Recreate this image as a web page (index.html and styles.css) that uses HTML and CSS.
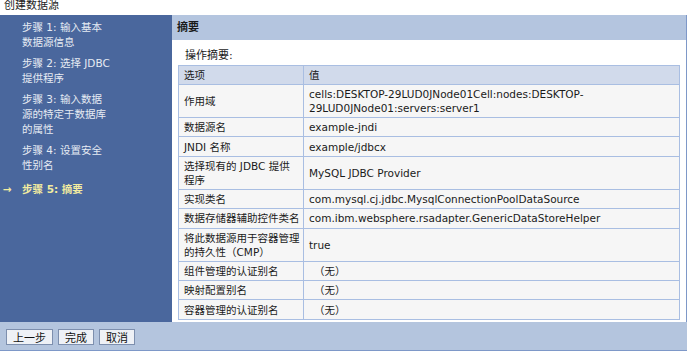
FILE: index.html
```html
<!DOCTYPE html>
<html lang="zh-CN">
<head>
  <meta charset="UTF-8">
  <title>创建数据源</title>
  <link rel="stylesheet" href="styles.css">
</head>
<body>
  <div class="page-title">创建数据源</div>
  <div class="wizard">
    <div class="steps">
      <div class="step">步骤 1: 输入基本数据源信息</div>
      <div class="step">步骤 2: 选择 JDBC 提供程序</div>
      <div class="step">步骤 3: 输入数据源的特定于数据库的属性</div>
      <div class="step">步骤 4: 设置安全性别名</div>
      <div class="step current"><span class="arrow">&rarr;</span>步骤 5: 摘要</div>
    </div>
    <div class="main">
      <div class="main-head">摘要</div>
      <div class="summary-label">操作摘要:</div>
      <table class="summary">
        <tr><th class="opt">选项</th><th>值</th></tr>
        <tr><td>作用域</td><td>cells:DESKTOP-29LUD0JNode01Cell:nodes:DESKTOP-<br>29LUD0JNode01:servers:server1</td></tr>
        <tr><td>数据源名</td><td>example-jndi</td></tr>
        <tr><td>JNDI 名称</td><td>example/jdbcx</td></tr>
        <tr><td>选择现有的 JDBC 提供<br>程序</td><td>MySQL JDBC Provider</td></tr>
        <tr><td>实现类名</td><td>com.mysql.cj.jdbc.MysqlConnectionPoolDataSource</td></tr>
        <tr><td>数据存储器辅助控件类名</td><td>com.ibm.websphere.rsadapter.GenericDataStoreHelper</td></tr>
        <tr><td>将此数据源用于容器管理的持久性（CMP）</td><td>true</td></tr>
        <tr><td>组件管理的认证别名</td><td class="none">（无）</td></tr>
        <tr><td>映射配置别名</td><td class="none">（无）</td></tr>
        <tr><td>容器管理的认证别名</td><td class="none">（无）</td></tr>
      </table>
    </div>
  </div>
  <div class="footer">
    <button class="btn">上一步</button>
    <button class="btn">完成</button>
    <button class="btn">取消</button>
  </div>
</body>
</html>
```

FILE: styles.css
```css
body {
  margin: 0;
  font-family: "DejaVu Sans", "Noto Sans CJK SC", sans-serif;
  font-size: 10.5px;
  color: #1a1a1a;
  background: #fff;
}
.page-title {
  height: 15px;
  font-size: 11px;
  line-height: 12px;
  padding-left: 4px;
  color: #222;
}
.wizard {
  display: flex;
  width: 687px;
  height: 307px;
  border-right: 1px solid #7e98c8;
  box-sizing: border-box;
}
.steps {
  width: 172px;
  background: #4a679d;
  padding: 5px 0 0 22px;
  box-sizing: border-box;
}
.step {
  width: 88px;
  color: #e6ebf3;
  font-size: 10.5px;
  line-height: 15px;
  margin-bottom: 6px;
  position: relative;
}
.step.current {
  color: #f2eba0;
  font-weight: bold;
  margin-top: 9px;
}
.arrow {
  position: absolute;
  left: -19px;
  top: 0;
}
.main {
  flex: 1;
  background: #fff;
}
.main-head {
  height: 25px;
  line-height: 25px;
  background: #b4c5df;
  font-weight: bold;
  font-size: 11px;
  padding-left: 5px;
}
.summary-label {
  font-size: 11px;
  padding: 6px 0 0 13px;
  height: 25px;
  box-sizing: border-box;
}
.summary {
  margin-left: 6px;
  width: 502px;
  border-collapse: collapse;
  font-size: 10.5px;
}
.summary th,
.summary td {
  border: 1px solid #a9bee2;
  padding: 2px 2px 2px 5px;
  text-align: left;
  font-weight: normal;
  line-height: 14px;
  vertical-align: middle;
}
.summary th {
  background: #d1daeb;
  height: 14px;
}
.summary th.opt {
  width: 117px;
}
.summary td {
  background: #f6f6f6;
  height: 14.4px;
}
.summary td.none {
  padding-left: 10px;
}
.footer {
  display: flex;
  gap: 5px;
  align-items: center;
  width: 687px;
  height: 29px;
  background: #b4c5de;
  border-bottom: 1px solid #7e98c8;
  padding: 1px 0 0 6px;
  box-sizing: border-box;
}
.btn {
  font-family: "Noto Sans CJK SC", sans-serif;
  font-size: 11px;
  line-height: 14px;
  padding: 0 6px;
  background: #eef1f6;
  border: 1px solid #7d8fae;
  color: #111;
}
```
